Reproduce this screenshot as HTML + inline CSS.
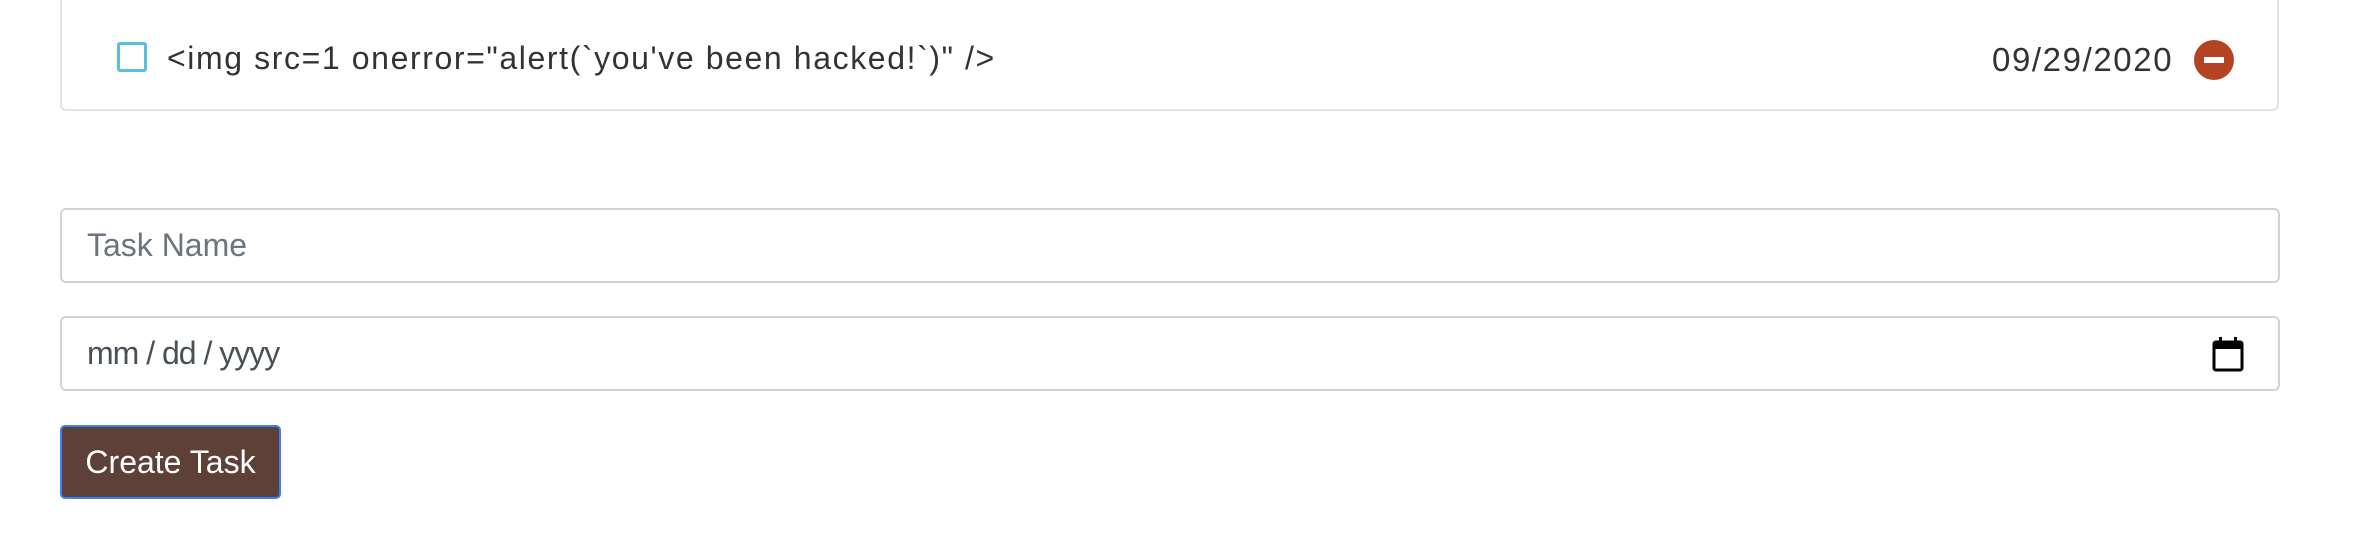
<!DOCTYPE html>
<html><head><style>
html,body{margin:0;padding:0;background:#fff;width:2356px;height:548px;overflow:hidden;font-family:"Liberation Sans",sans-serif;}
.card{position:absolute;left:60px;top:-20px;width:2219px;height:131px;border:2px solid #e3e3e3;border-radius:6px;box-sizing:border-box;}
.cb{position:absolute;left:117px;top:42px;width:30px;height:30px;border:3px solid #5bc0de;border-radius:3px;box-sizing:border-box;}
.t{position:absolute;left:167px;top:40px;font-size:32px;color:#333;white-space:nowrap;letter-spacing:1.6px;}
.d{position:absolute;left:1992px;top:41px;font-size:33px;color:#333;letter-spacing:1.6px;}
.minus{position:absolute;left:2194px;top:40px;width:40px;height:40px;border-radius:50%;background:#b34322;}
.minus:after{content:"";position:absolute;left:10px;top:17px;width:20px;height:6px;background:#fff;}
.in{position:absolute;left:60px;width:2220px;height:75px;border:2px solid #ced4da;border-radius:6px;box-sizing:border-box;font-size:32px;padding-left:25px;line-height:71px;}
.btn{position:absolute;left:60px;top:425px;width:221px;height:74px;background:#5d4037;border:2px solid #3b82f6;border-radius:5px;box-sizing:border-box;color:#fff;font-size:32px;line-height:70px;text-align:center;}
</style></head><body>
<div class="card"></div>
<div class="cb"></div>
<div class="t">&lt;img src=1 onerror="alert(`you've been hacked!`)" /&gt;</div>
<div class="d">09/29/2020</div>
<div class="minus"></div>
<div class="in" style="top:208px;color:#6c757d;">Task Name</div>
<div class="in" style="top:316px;color:#495057;"><span style="letter-spacing:-1px">mm / dd / yyyy</span>
<svg style="position:absolute;left:2150px;top:17px" width="34" height="38" viewBox="0 0 34 38"><rect x="2" y="7" width="28" height="28" rx="2" fill="none" stroke="#000" stroke-width="3"/><rect x="2" y="7" width="28" height="7" fill="#000"/><rect x="7" y="2" width="3" height="7" fill="#000"/><rect x="22" y="2" width="3" height="7" fill="#000"/></svg></div>
<div class="btn">Create Task</div>
</body></html>
